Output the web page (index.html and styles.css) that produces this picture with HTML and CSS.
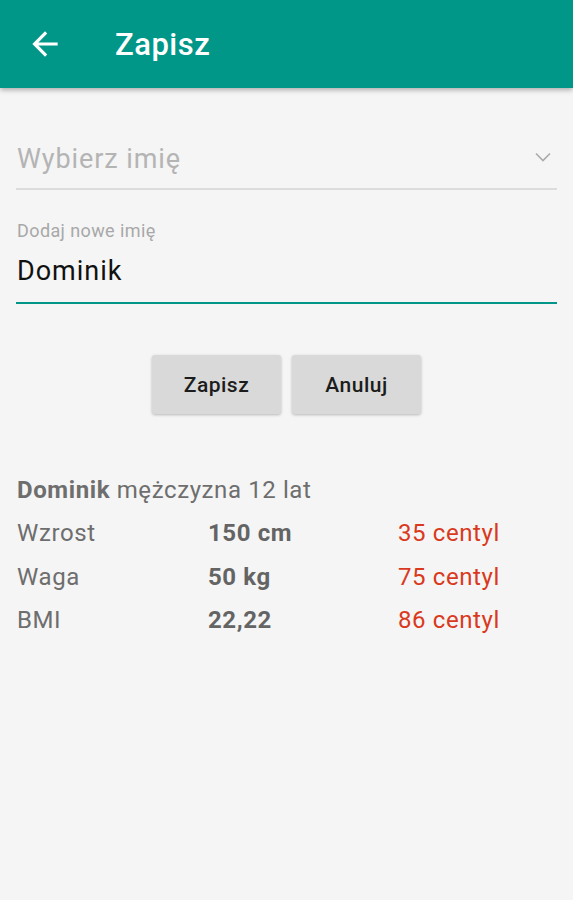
FILE: index.html
```html
<!DOCTYPE html>
<html>

<head>
    <meta charset="UTF-8">
    <meta name="viewport" content="width=device-width, initial-scale=1.0">
    <title>Zapisz</title>
    <link rel="stylesheet" href="styles.css">
</head>

<body>
    <div id="toolbar">
        <button id="toolbarBack">
            <svg id="toolbarBackIcon" viewBox="0 0 24 24"><use xlink:href="#arrow-back" /></svg>
        </button>
        <span id="toolbarTitle">Zapisz</span>
    </div>

    <div id="content">
        <div id="nameSpinner">
            <span id="nameSpinnerText">Wybierz imię</span>
            <svg id="nameSpinnerIcon" viewBox="0 0 16 10"><use xlink:href="#chevron-down" /></svg>
        </div>

        <div id="newName">
            <label id="newNameLabel" for="newNameInput">Dodaj nowe imię</label>
            <div id="newNameInput">Dominik</div>
        </div>

        <div id="actions">
            <button class="actionButton">Zapisz</button>
            <button class="actionButton">Anuluj</button>
        </div>

        <div id="summary">
            <div id="summaryTitle"><b>Dominik</b> mężczyzna 12 lat</div>
            <div class="summaryRow">
                <span class="summaryLabel">Wzrost</span>
                <span class="summaryValue">150 cm</span>
                <span class="summaryCentile">35 centyl</span>
            </div>
            <div class="summaryRow">
                <span class="summaryLabel">Waga</span>
                <span class="summaryValue">50 kg</span>
                <span class="summaryCentile">75 centyl</span>
            </div>
            <div class="summaryRow">
                <span class="summaryLabel">BMI</span>
                <span class="summaryValue">22,22</span>
                <span class="summaryCentile">86 centyl</span>
            </div>
        </div>
    </div>

    <svg xmlns="http://www.w3.org/2000/svg" style="display: none;">

    <symbol id="arrow-back" viewBox="0 0 24 24">
      <path fill="currentColor" d="M20 11H7.83l5.59-5.59L12 4l-8 8 8 8 1.41-1.41L7.83 13H20v-2z"></path>
    </symbol>

    <symbol id="chevron-down" viewBox="0 0 16 10" fill="none" stroke="currentColor" stroke-width="1.6">
      <polyline points="1 1.5 8 8.5 15 1.5"></polyline>
    </symbol>

    </svg>
</body>

</html>
```

FILE: styles.css
```css
body,
html {
    margin: 0;
    height: 100%;
    background-color: #f5f5f5;
    font-family: Roboto, 'Noto Sans', sans-serif;
}

#toolbar {
    display: flex;
    align-items: center;
    height: 88px;
    background-color: #009688;
    box-shadow: 0 2px 5px rgba(0, 0, 0, .3);
    color: #fff;
}

#toolbarBack {
    background: transparent;
    border: none;
    outline: none;
    padding: 0;
    margin: 0 0 0 26px;
    color: #fff;
    display: flex;
}

#toolbarBackIcon {
    width: 38px;
    height: 38px;
}

#toolbarTitle {
    margin-left: 51px;
    font-size: 31px;
    font-weight: 500;
    letter-spacing: .5px;
}

#content {
    padding: 0 16px;
}

#nameSpinner {
    display: flex;
    align-items: center;
    justify-content: space-between;
    margin-top: 42px;
    height: 58px;
    border-bottom: 2px solid #dcdcdc;
    padding-left: 1px;
}

#nameSpinnerText {
    font-size: 27px;
    color: #b4b4b4;
    letter-spacing: .9px;
}

#nameSpinnerIcon {
    width: 16px;
    height: 10px;
    margin-right: 6px;
    margin-bottom: 4px;
    color: #aaa;
}

#newName {
    margin-top: 30px;
    border-bottom: 2px solid #009688;
    padding-left: 1px;
}

#newNameLabel {
    display: block;
    font-size: 18px;
    line-height: 22px;
    color: #a8a8a8;
    letter-spacing: .4px;
}

#newNameInput {
    margin-top: 11px;
    padding-bottom: 13px;
    font-size: 27px;
    line-height: 36px;
    color: #111;
    letter-spacing: 1px;
}

#actions {
    display: flex;
    justify-content: center;
    gap: 11px;
    margin-top: 51px;
}

.actionButton {
    width: 129px;
    height: 59px;
    border: none;
    outline: none;
    border-radius: 3px;
    background-color: #d9d9d9;
    box-shadow: 0 1px 3px rgba(0, 0, 0, .25);
    font-family: Roboto, sans-serif;
    font-size: 21px;
    font-weight: 500;
    letter-spacing: .5px;
    color: #1c1c1c;
}

#summary {
    margin-top: 54px;
    padding-left: 1px;
    color: #6e6e6e;
    font-size: 24px;
    letter-spacing: .6px;
}

#summaryTitle {
    line-height: 44px;
}

.summaryRow {
    display: grid;
    grid-template-columns: 191px 190px 1fr;
    line-height: 43.5px;
}

.summaryValue {
    font-weight: bold;
    color: #646464;
}

.summaryCentile {
    color: #d9391c;
}
```
